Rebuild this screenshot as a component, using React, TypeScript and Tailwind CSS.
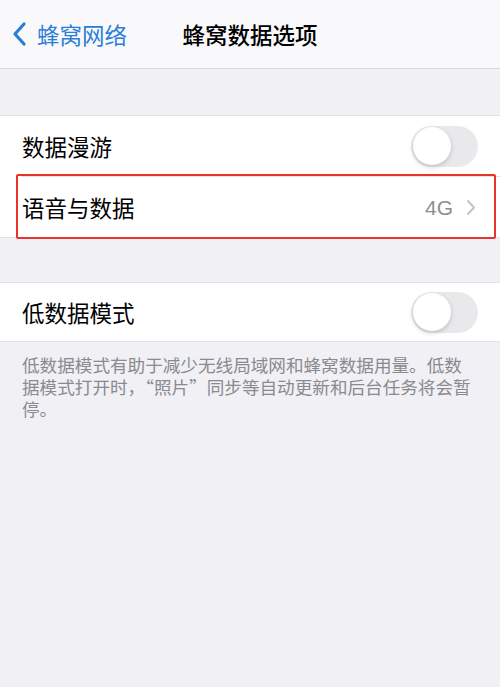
import React, { useState } from 'react';

const font = "font-['Noto_Sans_CJK_SC','Noto_Sans',sans-serif]";

const Toggle: React.FC<{ on: boolean; onChange: () => void }> = ({ on, onChange }) => (
  <button
    onClick={onChange}
    className={`relative w-[67px] h-[41px] rounded-full transition-colors ${on ? 'bg-[#34c759]' : 'bg-[#e9e9eb]'}`}
  >
    <span
      className={`absolute top-[1.5px] w-[38px] h-[38px] rounded-full bg-white shadow-[0_2px_5px_rgba(0,0,0,0.18)] transition-all ${on ? 'left-[27.5px]' : 'left-[1.5px]'}`}
    />
  </button>
);

export default function App() {
  const [roaming, setRoaming] = useState(false);
  const [lowData, setLowData] = useState(false);

  return (
    <div className={`w-[500px] h-[687px] bg-[#f0f0f5] ${font} text-black`}>
      {/* nav bar */}
      <div className="grid grid-cols-[1fr_auto_1fr] items-center h-[69px] bg-[#f9f9fb] border-b border-[#d8d8dc]">
        <div className="flex items-center pl-[11px] text-[#2a7ed8]">
          <svg width="18" height="26" viewBox="0 0 18 26" fill="none">
            <path d="M13 3L4 13l9 10" stroke="currentColor" strokeWidth="3.2" strokeLinecap="round" strokeLinejoin="round" />
          </svg>
          <span className="ml-[8px] text-[22.5px] leading-none">蜂窝网络</span>
        </div>
        <div className="text-[22.5px] font-medium leading-none">蜂窝数据选项</div>
        <div />
      </div>

      <div className="h-[46px]" />

      {/* roaming / voice & data */}
      <div className="bg-white border-y border-[#e2e2e6]">
        <div className="flex items-center justify-between h-[60px] pl-[22px] pr-[22px]">
          <span className="text-[22.5px] leading-none">数据漫游</span>
          <Toggle on={roaming} onChange={() => setRoaming(!roaming)} />
        </div>
        <div className="ml-[22px] h-px bg-[#e2e2e6]" />
        <div className="relative flex items-center justify-between h-[60px] pl-[22px] pr-[24px]">
          <span className="text-[22.5px] leading-none">语音与数据</span>
          <div className="flex items-center gap-[13px] text-[#8e8e93]">
            <span className="text-[21px] leading-none font-['Liberation_Sans',sans-serif]">4G</span>
            <svg width="10" height="17" viewBox="0 0 10 17" fill="none">
              <path d="M2 2l6 6.5L2 15" stroke="#c4c4c8" strokeWidth="2" strokeLinecap="round" strokeLinejoin="round" />
            </svg>
          </div>
          <div className="absolute left-[16px] right-[4px] top-[-3px] bottom-[-2px] border-2 border-[#e8322c] rounded-[2px] pointer-events-none" />
        </div>
      </div>

      <div className="h-[44px]" />

      {/* low data mode */}
      <div className="bg-white border-y border-[#e2e2e6]">
        <div className="flex items-center justify-between h-[58px] pl-[22px] pr-[22px]">
          <span className="text-[22.5px] leading-none">低数据模式</span>
          <Toggle on={lowData} onChange={() => setLowData(!lowData)} />
        </div>
      </div>

      <p className="px-[22px] pt-[12px] text-[17.6px] leading-[22px] text-[#8a8a8f]">
        低数据模式有助于减少无线局域网和蜂窝数据用量。低数据模式打开时，“照片”同步等自动更新和后台任务将会暂停。
      </p>
    </div>
  );
}
